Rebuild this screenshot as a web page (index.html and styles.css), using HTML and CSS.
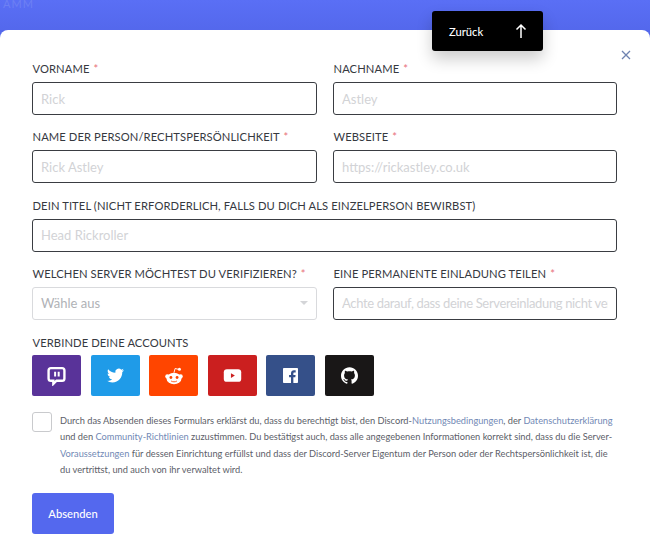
FILE: index.html
```html
<!DOCTYPE html>
<html lang="de">
<head>
<meta charset="utf-8">
<title>Verifizierung</title>
<link rel="stylesheet" href="styles.css">
</head>
<body>
<header class="band"><span class="band-text">AMM</span></header>
<a class="back">
  <span>Zurück</span>
  <svg class="back-icon" viewBox="0 0 14 16" width="14" height="16"><path d="M7 15V2M2.500 6.500 7 2l4.500 4.500" fill="none" stroke="#fff" stroke-width="1.500"/></svg>
</a>
<main class="panel">
  <svg class="close" viewBox="0 0 10 10" width="10" height="10"><path d="M1 1l8 8M9 1l-8 8" stroke="#6f83b0" stroke-width="1.300" fill="none"/></svg>
  <form class="form">
    <div class="grid">
      <div class="field"><label class="label">Vorname <em>*</em></label><input class="input" placeholder="Rick"></div>
      <div class="field"><label class="label">Nachname <em>*</em></label><input class="input" placeholder="Astley"></div>
      <div class="field"><label class="label">Name der Person/Rechtspersönlichkeit <em>*</em></label><input class="input" placeholder="Rick Astley"></div>
      <div class="field"><label class="label">Webseite <em>*</em></label><input class="input" placeholder="https://rickastley.co.uk"></div>
      <div class="field wide"><label class="label">Dein Titel (nicht erforderlich, falls du dich als Einzelperson bewirbst)</label><input class="input" placeholder="Head Rickroller"></div>
      <div class="field"><label class="label">Welchen Server möchtest du verifizieren? <em>*</em></label>
        <div class="select"><span>Wähle aus</span><i class="caret"></i></div></div>
      <div class="field"><label class="label">Eine permanente Einladung teilen <em>*</em></label><input class="input input-tight" placeholder="Achte darauf, dass deine Servereinladung nicht verfällt"></div>
    </div>
    <div class="accounts">
      <div class="label">Verbinde deine Accounts</div>
      <div class="socials">
        <a class="social twitch"><svg viewBox="0 0 24 24" width="19" height="20"><path d="M5 2h14a3 3 0 0 1 3 3v10a3 3 0 0 1-3 3h-7l-4 4v-4H5a3 3 0 0 1-3-3V5a3 3 0 0 1 3-3z" fill="none" stroke="#fff" stroke-width="3"/><path d="M9 6.500h2.500v6H9zM13.500 6.500H16v6h-2.500z" fill="#fff"/></svg></a>
        <a class="social twitter"><svg viewBox="0 0 24 24" width="17" height="17"><path fill="#fff" d="M23.953 4.570a10 10 0 01-2.825.775 4.958 4.958 0 002.163-2.723c-.951.555-2.005.959-3.127 1.184a4.920 4.920 0 00-8.384 4.482C7.690 8.095 4.067 6.130 1.640 3.162a4.822 4.822 0 00-.666 2.475c0 1.710.870 3.213 2.188 4.096a4.904 4.904 0 01-2.228-.616v.060a4.923 4.923 0 003.946 4.827 4.996 4.996 0 01-2.212.085 4.936 4.936 0 004.604 3.417 9.867 9.867 0 01-6.102 2.105c-.390 0-.779-.023-1.170-.067a13.995 13.995 0 007.557 2.209c9.053 0 13.998-7.496 13.998-13.985 0-.210 0-.420-.015-.630A9.935 9.935 0 0024 4.590z"/></svg></a>
        <a class="social reddit"><svg viewBox="0 0 24 24" width="20" height="20"><circle cx="4" cy="12.500" r="2.500" fill="#fff"/><circle cx="20" cy="12.500" r="2.500" fill="#fff"/><ellipse cx="12" cy="15" rx="9" ry="7" fill="#fff"/><circle cx="8.300" cy="13.800" r="1.700" fill="#ff4500"/><circle cx="15.700" cy="13.800" r="1.700" fill="#ff4500"/><path d="M8.500 18c2 1.300 5 1.300 7 0" stroke="#ff4500" stroke-width="1" fill="none"/><path d="M12 8l1.300-5 4.200 1" stroke="#fff" stroke-width="1.100" fill="none"/><circle cx="18.500" cy="4" r="1.800" fill="#fff"/></svg></a>
        <a class="social youtube"><svg viewBox="0 0 24 24" width="19" height="19"><rect x="1" y="4" width="22" height="16" rx="4" fill="#fff"/><path d="M10 9v6l5-3z" fill="#cb1f1f"/></svg></a>
        <a class="social facebook"><svg viewBox="0 0 24 24" width="15" height="15"><path fill="#fff" d="M22.675 0H1.325C.593 0 0 .593 0 1.325v21.351C0 23.407.593 24 1.325 24H12.820v-9.294H9.692v-3.622h3.128V8.413c0-3.100 1.893-4.788 4.659-4.788 1.325 0 2.463.099 2.795.143v3.240l-1.918.001c-1.504 0-1.795.715-1.795 1.763v2.313h3.587l-.467 3.622h-3.120V24h6.116c.730 0 1.323-.593 1.323-1.325V1.325C24 .593 23.407 0 22.675 0z"/></svg></a>
        <a class="social github"><svg viewBox="0 0 24 24" width="17" height="17"><path fill="#fff" d="M12 .297c-6.630 0-12 5.373-12 12 0 5.303 3.438 9.800 8.205 11.385.6.113.820-.258.820-.577 0-.285-.010-1.040-.015-2.040-3.338.724-4.042-1.610-4.042-1.610C4.422 18.070 3.633 17.700 3.633 17.700c-1.087-.744.084-.729.084-.729 1.205.084 1.838 1.236 1.838 1.236 1.070 1.835 2.809 1.305 3.495.998.108-.776.417-1.305.760-1.605-2.665-.3-5.466-1.332-5.466-5.930 0-1.310.465-2.380 1.235-3.220-.135-.303-.540-1.523.105-3.176 0 0 1.005-.322 3.300 1.230.960-.267 1.980-.399 3-.405 1.020.006 2.040.138 3 .405 2.280-1.552 3.285-1.230 3.285-1.230.645 1.653.240 2.873.120 3.176.765.840 1.230 1.910 1.230 3.220 0 4.610-2.805 5.625-5.475 5.920.420.360.810 1.096.810 2.220 0 1.606-.015 2.896-.015 3.286 0 .315.210.690.825.570C20.565 22.092 24 17.592 24 12.297c0-6.627-5.373-12-12-12"/></svg></a>
      </div>
    </div>
    <div class="consent">
      <span class="checkbox"></span>
      <p class="consent-text">Durch das Absenden dieses Formulars erklärst du, dass du berechtigt bist, den Discord-<a>Nutzungsbedingungen</a>, der <a>Datenschutzerklärung</a> und den <a>Community-Richtlinien</a> zuzustimmen. Du bestätigst auch, dass alle angegebenen Informationen korrekt sind, dass du die Server-<a>Voraussetzungen</a> für dessen Einrichtung erfüllst und dass der Discord-Server Eigentum der Person oder der Rechtspersönlichkeit ist, die du vertrittst, und auch von ihr verwaltet wird.</p>
    </div>
    <button class="submit" type="button">Absenden</button>
  </form>
</main>
</body>
</html>
```
FILE: styles.css
```css
html, body { margin: 0; padding: 0; height: 534px; overflow: hidden; }
body { background: #fff; font-family: Lato, "Open Sans", sans-serif; color: #4f5660; position: relative; }
.band { height: 38px; margin-bottom: -8px; background: linear-gradient(#5a6ff5, #5266ea); overflow: hidden; }
.band-text { display: block; font-size: 11px; line-height: 8px; letter-spacing: 1px; color: #6d80f3; padding-left: 3px; }
.back { position: absolute; left: 432px; top: 11px; width: 111px; height: 40px; box-sizing: border-box; padding: 0 15px 0 17px; display: flex; align-items: center; justify-content: space-between; background: #000; color: #fff; font-size: 11.200px; font-weight: 500; border-radius: 3px; box-shadow: 0 8px 16px rgba(0,0,0,.2); z-index: 2; }
.panel { box-sizing: border-box; height: 504px; background: #fff; border-radius: 8px 8px 0 0; position: relative; padding: 0 33px 0 32px; }
.close { position: absolute; right: 19px; top: 20px; }
.form { padding-top: 31px; }
.grid { display: grid; grid-template-columns: 285px 284px; column-gap: 16px; row-gap: 14.250px; }
.wide { grid-column: 1 / -1; }
.field { display: flex; flex-direction: column; gap: 6px; }
.label { display: block; font-size: 11.200px; line-height: 15px; height: 15px; text-transform: uppercase; letter-spacing: .1px; padding-left: .5px; color: #36393f; white-space: nowrap; }
.label em { font-style: normal; color: #e8707a; margin-left: 1px; }
.input { box-sizing: border-box; width: 100%; height: 33px; padding: 0 8px; border: 1px solid #3a3d42; border-radius: 3px; background: #fff; font: 13px Lato, sans-serif; outline: none; }
.input::placeholder { color: #d2d3d6; opacity: 1; }
.input-tight { letter-spacing: -.35px; }
.select { box-sizing: border-box; height: 33px; display: flex; align-items: center; justify-content: space-between; padding: 0 8px; border: 1px solid #d9dadd; border-radius: 3px; color: #b0b2b6; font-size: 13px; }
.caret { width: 0; height: 0; border: 4px solid transparent; border-top: 4px solid #d4d5d8; border-bottom: 0; }
.accounts { margin-top: 15.250px; }
.socials { display: flex; gap: 9.500px; margin-top: 5px; }
.social { width: 49px; height: 41px; border-radius: 2px; display: flex; align-items: center; justify-content: center; }
.twitch { background: #593399; }
.twitter { background: #1f9be8; }
.reddit { background: #ff4500; }
.youtube { background: #cb1f1f; }
.facebook { background: #355089; }
.github { background: #191717; }
.consent { display: flex; gap: 8px; margin-top: 16px; }
.checkbox { flex: none; box-sizing: border-box; width: 20px; height: 20px; border: 1px solid #c9cacd; border-radius: 3px; }
.consent-text { margin: 0; width: 557px; font-size: 9.250px; line-height: 16.300px; color: #5c6068; padding-top: 1px; }
.consent-text a { color: #7289b5; }
.submit { display: block; margin-top: 15px; width: 82px; height: 41px; border: 0; border-radius: 3px; background: #5468ee; color: #fff; font: 500 11.200px Lato, sans-serif; padding: 0; }
```
